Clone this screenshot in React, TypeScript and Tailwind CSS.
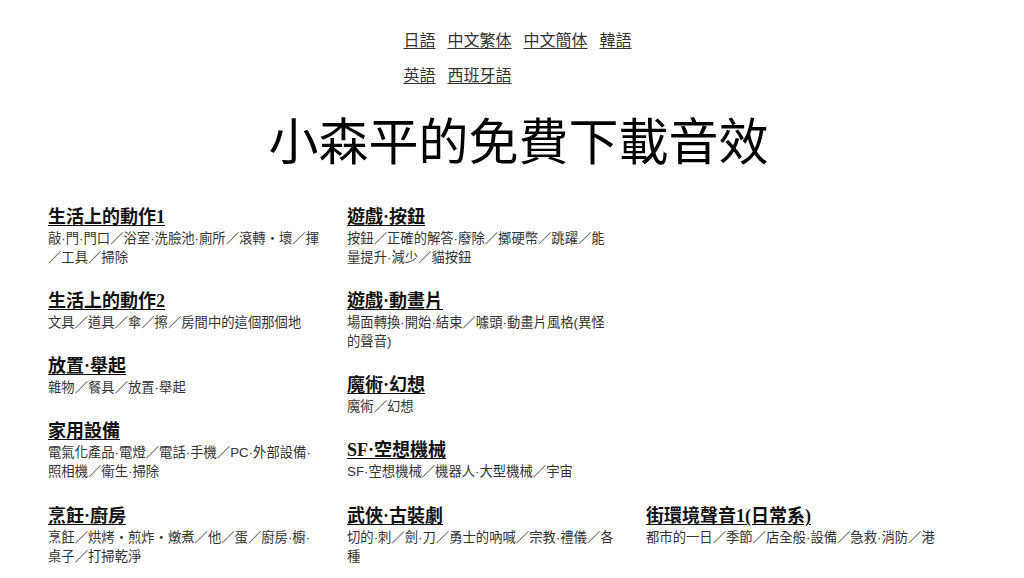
import React from "react";

interface Category {
  title: string;
  desc: string;
}

const languages = ["日語", "中文繁体", "中文簡体", "韓語", "英語", "西班牙語"];

const column1: Category[] = [
  { title: "生活上的動作1", desc: "敲·門·門口／浴室·洗臉池·廁所／滾轉・壞／揮／工具／掃除" },
  { title: "生活上的動作2", desc: "文具／道具／傘／擦／房間中的這個那個地" },
  { title: "放置·舉起", desc: "雜物／餐具／放置·舉起" },
  { title: "家用設備", desc: "電氣化產品·電燈／電話·手機／PC·外部設備·照相機／衛生·掃除" },
];

const column2: Category[] = [
  { title: "遊戲·按鈕", desc: "按鈕／正確的解答·廢除／擲硬幣／跳躍／能量提升·減少／貓按鈕" },
  { title: "遊戲·動畫片", desc: "場面轉換·開始·結束／噱頭·動畫片風格(異怪的聲音)" },
  { title: "魔術·幻想", desc: "魔術／幻想" },
  { title: "SF·空想機械", desc: "SF·空想機械／機器人·大型機械／宇宙" },
];

const Item: React.FC<{ item: Category; textWidth: string }> = ({ item, textWidth }) => (
  <div className="w-[299px]">
    <a
      href="#"
      className="block text-[18px] leading-[24px] font-bold text-[#111] underline underline-offset-[2px] font-['Liberation_Serif','Noto_Sans_CJK_TC',serif]"
    >
      {item.title}
    </a>
    <p
      className={`${textWidth} text-[13.33px] leading-[19px] text-[#333] font-['Liberation_Sans','Noto_Sans_CJK_TC',sans-serif]`}
    >
      {item.desc}
    </p>
  </div>
);

export default function App() {
  return (
    <div className="min-h-screen bg-white text-black font-['Noto_Sans_CJK_TC',sans-serif]">
      <header className="flex flex-col items-center pl-[13px] pt-[22px]">
        <nav className="w-[230px] flex flex-wrap gap-x-3 text-[16px] leading-[35px]">
          {languages.map((lang) => (
            <a key={lang} href="#" className="text-[#333] underline underline-offset-[2px]">
              {lang}
            </a>
          ))}
        </nav>
        <h1 className="mt-[16px] text-[50px] leading-[60px] font-normal text-black">
          小森平的免費下載音效
        </h1>
      </header>

      <main className="pl-[48px] pt-[37px] pb-8">
        <div className="flex">
          <div className="flex flex-col gap-[22px]">
            {column1.map((item) => (
              <Item key={item.title} item={item} textWidth="w-[274px]" />
            ))}
          </div>
          <div className="flex flex-col gap-[22px]">
            {column2.map((item) => (
              <Item key={item.title} item={item} textWidth="w-[269px]" />
            ))}
          </div>
        </div>
        <div className="mt-[23px] flex">
          <Item
            item={{ title: "烹飪·廚房", desc: "烹飪／烘烤・煎炸・燉煮／他／蛋／廚房·櫥·桌子／打掃乾淨" }}
            textWidth="w-[274px]"
          />
          <Item
            item={{ title: "武俠·古裝劇", desc: "切的·刺／劍·刀／勇士的吶喊／宗教·禮儀／各種" }}
            textWidth="w-[269px]"
          />
          <Item
            item={{ title: "街環境聲音1(日常系)", desc: "都市的一日／季節／店全般·設備／急救·消防／港" }}
            textWidth="w-[299px]"
          />
        </div>
      </main>
    </div>
  );
}
